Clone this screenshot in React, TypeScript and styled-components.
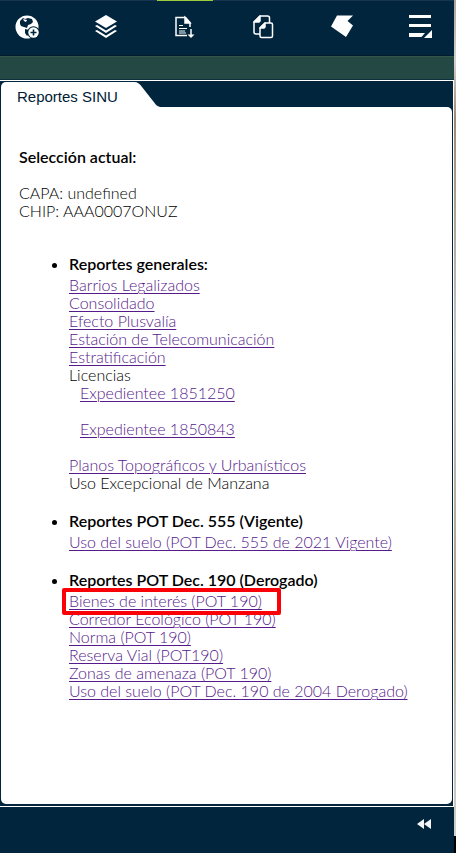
import React from 'react';
import styled, { createGlobalStyle } from 'styled-components';

const navy = '#00253d';

const GlobalStyle = createGlobalStyle`
  *, *::before, *::after { box-sizing: border-box; }
  body {
    margin: 0;
    background: ${navy};
    color: #000;
    font-family: Lato, 'Open Sans', sans-serif;
    font-size: 16px;
    font-weight: 300;
    line-height: 18px;
  }
`;

const Screen = styled.div`
  display: flex;
  min-height: 100vh;
`;

const Viewer = styled.div`
  display: flex;
  flex: 1;
  flex-direction: column;
  min-width: 0;
`;

const MapEdge = styled.div`
  width: 2px;
  background: linear-gradient(#aaa59c 0, #d5d2cc 7%, #9c8a78 14%, #c6c6c2 40%, #b0a090 70%, #d0d0cd 98%, #000 98%);
`;

const Toolbar = styled.nav`
  display: flex;
  justify-content: space-between;
  height: 56px;
  padding-right: 6px;
  background: ${navy};
  border-top: 1px solid #16344f;
  border-bottom: 1px solid #001b2c;
`;

const ToolButton = styled.button<{ $active?: boolean }>`
  display: flex;
  align-items: center;
  justify-content: center;
  width: 56px;
  margin-top: -1px;
  padding: 0 0 2px;
  border: 0;
  border-top: 1px solid ${(p) => (p.$active ? '#9ccb3b' : 'transparent')};
  background: none;
  color: #fff;
  cursor: pointer;

  svg { display: block; width: 26px; height: 26px; }
`;

const MapBand = styled.div`
  height: 24px;
  background: #244844;
  border-top: 1px solid #355547;
  border-bottom: 1px solid #102f3d;
`;

const Panel = styled.section`
  display: flex;
  flex: 1;
  flex-direction: column;
  padding: 1px 1px 2px;
  background: ${navy};
  border: solid #fff;
  border-width: 1px 1px 1px 0;
`;

const TabRow = styled.div`
  display: flex;
  height: 25px;
`;

const Tab = styled.h1`
  margin: 0;
  padding: 4px 16px 0 16px;
  border-top-left-radius: 5px;
  background: #fff;
  color: #001b36;
  font: 400 15px/22px 'Liberation Sans', Arial, sans-serif;
`;

const TabSlope = styled.svg`
  display: block;
  width: 26px;
  height: 25px;
`;

const Report = styled.main`
  flex: 1;
  padding: 41px 16px 24px 18px;
  border-radius: 0 5px 5px 5px;
  background: #fff;
`;

const Heading = styled.h2`
  margin: 0;
  font-size: 16px;
  font-weight: 600;
  line-height: 18px;
`;

const Summary = styled.p`
  margin: 18px 0 35px;
`;

const Groups = styled.ul`
  display: flex;
  flex-direction: column;
  gap: 20px;
  margin: 0;
  padding-left: 50px;
`;

const Entries = styled.ul`
  margin: 0;
  padding: 3px 0 0;
  list-style: none;
`;

const Licences = styled.ul`
  display: flex;
  flex-direction: column;
  gap: 18px;
  margin: 0 0 18px;
  padding-left: 11px;
  list-style: none;
`;

const ReportLink = styled.a`
  color: #551a8b;
  text-decoration: underline;
  text-decoration-thickness: 1px;
  text-underline-offset: 2px;
`;

const HighlightedEntry = styled.li`
  position: relative;
  width: fit-content;

  &::after {
    content: '';
    position: absolute;
    inset: -4px -19px -5px -7px;
    border: 4px solid #fb0007;
    border-radius: 2px;
    pointer-events: none;
  }
`;

const Footer = styled.footer`
  display: flex;
  justify-content: flex-end;
  align-items: center;
  height: 46px;
  padding: 0 22px 12px;
  background: ${navy};
`;

const CollapseButton = styled.button`
  padding: 0;
  border: 0;
  background: none;
  color: #f3f5f7;
  cursor: pointer;

  svg { display: block; width: 16px; height: 12px; }
`;

const GlobeIcon = () => (
  <svg viewBox="0 0 26 26" aria-hidden="true">
    <circle cx="12" cy="13" r="11.500" fill="#fff" />
    <path d="M5 7l3-3 2 1 3-1 4 1 1 3-2 2-3 1-1 3-3-1-3-1-1-2z" fill={navy} />
    <path d="M10 15l4 1 1 3-3 3-2-3z" fill={navy} />
    <path d="M8 5l4 1-1 2-2-1z" fill="#fff" />
    <circle cx="18.500" cy="18.500" r="6.200" fill={navy} />
    <circle cx="18.500" cy="18.500" r="5.200" fill="#fff" />
    <path d="M18.500 15.500v6M15.500 18.500h6" stroke={navy} strokeWidth="1.600" />
  </svg>
);

const LayersIcon = () => (
  <svg viewBox="0 0 26 26" aria-hidden="true" fill="#fff">
    <path d="M13 1l11 6.500L13 14 2 7.500z" />
    <path d="M2 12l2-1 9 5.500 9-5.500 2 1-11 7zM2 17l2-1 9 5.500 9-5.500 2 1-11 7z" />
  </svg>
);

const DocumentIcon = () => (
  <svg viewBox="0 0 26 26" aria-hidden="true" fill="none" stroke="#fff" strokeWidth="1.500">
    <path d="M15 21.500H4V3.500h9.500l4.500 5V13" />
    <path d="M13 3.500v5.500h5z" fill="#fff" />
    <path d="M7 11.500h4M7 14.500h8M7 17h6M7 19h7" strokeWidth="1" />
    <path d="M19 15v7" />
    <path d="M15.500 20.500h7L19 24z" fill="#fff" stroke="none" />
  </svg>
);

const CopyIcon = () => (
  <svg viewBox="0 0 26 26" aria-hidden="true" fill="none" stroke="#fff" strokeWidth="1.500" strokeLinejoin="round">
    <path d="M10 20H6a2 2 0 0 1-2-2V8l6-6h7.500a2 2 0 0 1 2 2v5" />
    <path d="M4 8l6-6v5l-1 1z" fill="#fff" />
    <path d="M15 9h6a1.500 1.500 0 0 1 1.500 1.500v11.500a1.500 1.500 0 0 1-1.500 1.500H11.500A1.500 1.500 0 0 1 10 22v-8z" fill={navy} />
    <path d="M10 14l5-5v4l-1 1z" fill="#fff" />
  </svg>
);

const PolygonIcon = () => (
  <svg viewBox="0 0 26 26" aria-hidden="true" fill="#fff">
    <path d="M8 1.500h16L18.500 7l5.500 4.500L17 23 2 12.500z" />
  </svg>
);

const MenuIcon = () => (
  <svg viewBox="0 0 26 26" aria-hidden="true" fill="#fff">
    <path d="M2 1h22v3H2zM2 10h22v3H2zM2 19h16l-3.500 4H2zM25 16v8h-8z" />
  </svg>
);

const tools = [
  { label: 'Mapa base', Icon: GlobeIcon },
  { label: 'Capas', Icon: LayersIcon },
  { label: 'Reportes', Icon: DocumentIcon, active: true },
  { label: 'Copiar', Icon: CopyIcon },
  { label: 'Dibujar', Icon: PolygonIcon },
  { label: 'Menú', Icon: MenuIcon },
];

const generalReports = [
  'Barrios Legalizados',
  'Consolidado',
  'Efecto Plusvalía',
  'Estación de Telecomunicación',
  'Estratificación',
];

const repealedReports = [
  'Corredor Ecológico (POT 190)',
  'Norma (POT 190)',
  'Reserva Vial (POT190)',
  'Zonas de amenaza (POT 190)',
  'Uso del suelo (POT Dec. 190 de 2004 Derogado)',
];

const LinkEntry = ({ text }: { text: string }) => (
  <li><ReportLink href="#">{text}</ReportLink></li>
);

export default function App() {
  return (
    <Screen>
      <GlobalStyle />
      <Viewer>
        <Toolbar>
          {tools.map(({ label, Icon, active }) => (
            <ToolButton key={label} type="button" aria-label={label} $active={active}>
              <Icon />
            </ToolButton>
          ))}
        </Toolbar>
        <MapBand />
        <Panel>
          <TabRow>
            <Tab>Reportes SINU</Tab>
            <TabSlope viewBox="0 0 26 25" aria-hidden="true">
              <path d="M0 0C4 0 6 2 8 5l11 14c3 4 4 5 7 6H0z" fill="#fff" />
            </TabSlope>
          </TabRow>
          <Report>
            <Heading>Selección actual:</Heading>
            <Summary>
              CAPA: undefined<br />
              CHIP: AAA0007ONUZ
            </Summary>
            <Groups>
              <li>
                <Heading>Reportes generales:</Heading>
                <Entries>
                  {generalReports.map((text) => <LinkEntry key={text} text={text} />)}
                  <li>
                    Licencias
                    <Licences>
                      <LinkEntry text="Expedientee 1851250" />
                      <LinkEntry text="Expedientee 1850843" />
                    </Licences>
                  </li>
                  <LinkEntry text="Planos Topográficos y Urbanísticos" />
                  <li>Uso Excepcional de Manzana</li>
                </Entries>
              </li>
              <li>
                <Heading>Reportes POT Dec. 555 (Vigente)</Heading>
                <Entries>
                  <LinkEntry text="Uso del suelo (POT Dec. 555 de 2021 Vigente)" />
                </Entries>
              </li>
              <li>
                <Heading>Reportes POT Dec. 190 (Derogado)</Heading>
                <Entries>
                  <HighlightedEntry>
                    <ReportLink href="#">Bienes de interés (POT 190)</ReportLink>
                  </HighlightedEntry>
                  {repealedReports.map((text) => <LinkEntry key={text} text={text} />)}
                </Entries>
              </li>
            </Groups>
          </Report>
        </Panel>
        <Footer>
          <CollapseButton type="button" aria-label="Contraer panel">
            <svg viewBox="0 0 16 12" aria-hidden="true" fill="currentColor">
              <path d="M8 1v10L1 6zM15 1v10L8 6z" />
            </svg>
          </CollapseButton>
        </Footer>
      </Viewer>
      <MapEdge />
    </Screen>
  );
}
